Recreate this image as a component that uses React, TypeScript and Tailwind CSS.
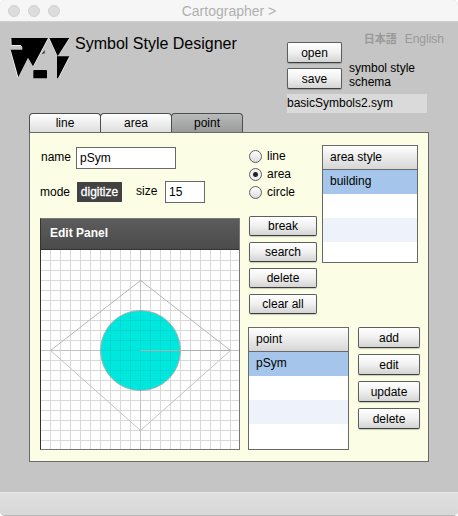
import React, { useState } from "react";

const face =
  "rounded-[2px] border border-[#5c5f5f] border-b-[#3c3f3f] bg-linear-to-b from-white via-[#f0f0f0] to-[#d4d4d4] text-center text-xs leading-4 text-black shadow-[0_1px_1px_rgba(0,0,0,0.2)]";

function PushButton({ label, className }: { label: string; className: string }) {
  return (
    <button type="button" className={`${face} ${className}`}>
      {label}
    </button>
  );
}

function Logo() {
  return (
    <svg viewBox="30 33 180 129" className="h-[43px] w-[60px] shrink-0" aria-label="Logo">
      <g fill="none" stroke="#fff" strokeWidth="3" strokeOpacity="0.8">
        <path d="M33 42L35 61H62L67 66" />
        <path d="M32 77L54 157" />
        <path d="M144 41L100 123" />
        <path d="M148 41L173 93L208 41" />
        <path d="M208 96L175 159" />
      </g>
      <path d="M34 39H144L99 124L84 98L55 156L32 74H67V66L62 60H35Z" fill="#000" />
      <path d="M148 39H208L173 94Z" fill="#000" />
      <path d="M171 94H208L174 160H171Z" fill="#000" />
      <path d="M134 75V85L125 88Z" fill="#333" />
      <path d="M100 137L102 135H139L141 137V160H100Z" fill="#000" />
    </svg>
  );
}

function StyleTable({
  title,
  first,
  className,
  last,
}: {
  title: string;
  first: string;
  className: string;
  last: string;
}) {
  return (
    <div className={`border border-[#696969] bg-white ${className}`}>
      <table className="w-full border-separate border-spacing-0 text-left text-xs leading-4">
        <thead>
          <tr>
            <th className="h-6 border-b border-[#696969] bg-linear-to-b from-white to-[#d6d6d6] px-[7px] pt-0 pb-[2px] font-normal">
              {title}
            </th>
          </tr>
        </thead>
        <tbody>
          <tr>
            <td className="h-6 bg-[#a5c6ea] px-[7px] pt-0 pb-[2px]">{first}</td>
          </tr>
          <tr>
            <td className="h-6 p-0" />
          </tr>
          <tr>
            <td className="h-6 bg-[#edf2fb] p-0" />
          </tr>
          <tr>
            <td className={`p-0 ${last}`} />
          </tr>
        </tbody>
      </table>
    </div>
  );
}

const steps = Array.from({ length: 19 }, (_, i) => i * 10);
const gridPath = steps.map((s) => `M${s + 9.5} 0V199M0 ${s + 10.5}H198`).join("");

function EditCanvas() {
  return (
    <svg viewBox="0 0 198 199" className="block w-full bg-white" aria-label="Symbol drawing">
      <clipPath id="disc">
        <circle cx="99.5" cy="100.5" r="40" />
      </clipPath>
      <path d={gridPath} stroke="#d9d9d9" />
      <path d="M99.5 0V199M0 100.5H198" stroke="#c2c4c4" />
      <circle cx="99.5" cy="100.5" r="40" fill="#00e8de" stroke="#a9b4b4" />
      <path d={gridPath} stroke="#006464" strokeOpacity="0.1" clipPath="url(#disc)" />
      <g fill="none">
        <path d="M9.5 100.5L99.5 30.5L189.5 100.5" stroke="#b4b7b7" />
        <path d="M9.5 100.5L99.5 180.5L189.5 100.5" stroke="#c2c5c5" />
        <path d="M99 100.5H189.5" stroke="#adb0b0" />
      </g>
    </svg>
  );
}

const tabs = ["line", "area", "point"];
const shapes = ["line", "area", "circle"];
const actions = ["break", "search", "delete", "clear all"];
const edits = ["add", "edit", "update", "delete"];

export default function App() {
  const [tab, setTab] = useState("point");
  const [shape, setShape] = useState("area");

  return (
    <div className="flex min-h-screen flex-col bg-white font-['Liberation_Sans',Arial,'Noto_Sans_CJK_JP',sans-serif] text-xs text-black">
      <div className="flex grow flex-col overflow-hidden rounded-[5px] bg-[#c5c5c5]">
        <div className="grid h-[22px] grid-cols-[1fr_auto_1fr] items-center border-b border-[#cfcfcf] bg-[#f6f6f6] px-2">
          <div className="flex gap-2">
            <span className="size-3 rounded-full border border-[#d0d0d0] bg-[#dcdcdc]" />
            <span className="size-3 rounded-full border border-[#d0d0d0] bg-[#dcdcdc]" />
            <span className="size-3 rounded-full border border-[#d0d0d0] bg-[#dcdcdc]" />
          </div>
          <div className="text-sm leading-5 text-[#b0b0b0]">Cartographer &gt;</div>
        </div>

        <header className="flex items-start justify-between pt-[10px] pr-[14px] pl-[10px]">
          <div className="flex items-start pt-1">
            <Logo />
            <h1 className="pl-[5px] text-base leading-4">Symbol Style Designer</h1>
          </div>
          <div className="w-[157px]">
            <div className="flex gap-[7px]">
              <div className="flex flex-col gap-[5px] pt-[10px]">
                <PushButton label="open" className="h-[21px] w-[55px]" />
                <PushButton label="save" className="h-[21px] w-[55px]" />
              </div>
              <div className="flex grow flex-col justify-between">
                <nav className="flex justify-end gap-2 leading-[14px] text-[#999]">
                  <a href="#ja" className="text-[11px] leading-[14px] font-bold">
                    日本語
                  </a>
                  <a href="#en">English</a>
                </nav>
                <p className="leading-[14px]">
                  symbol style
                  <br />
                  schema
                </p>
              </div>
            </div>
            <p className="mt-[5px] h-[19px] w-[140px] bg-[#dadada] leading-[18px]">basicSymbols2.sym</p>
          </div>
        </header>

        <main className="px-[29px] pb-[30px]">
          <div className="flex" role="tablist">
            {tabs.map((t) => (
              <button
                key={t}
                type="button"
                role="tab"
                aria-selected={tab === t}
                onClick={() => setTab(t)}
                className={`-mr-px h-[19px] w-[72px] rounded-t-[4px] border border-b-0 border-[#4c4f4f] bg-linear-to-b leading-4 ${
                  tab === t ? "from-[#b9bbbb] to-[#9a9c9c]" : "from-white to-[#dedede]"
                }`}
              >
                {t}
              </button>
            ))}
          </div>

          <section className="flex gap-2 border border-[#696969] bg-[#fbfee5] pt-3 pr-2 pb-[11px] pl-[10px]">
            <div className="flex grow flex-col">
              <div className="flex items-center pt-[2px]">
                <label htmlFor="name" className="w-9 pb-[2px] pl-px">
                  name
                </label>
                <input
                  id="name"
                  defaultValue="pSym"
                  className="h-[22px] w-[100px] border border-[#696969] bg-white px-[3px] outline-none"
                />
              </div>
              <div className="mt-3 flex items-center">
                <span className="w-[37px]">mode</span>
                <button
                  type="button"
                  className="h-5 w-[45px] bg-[#424242] text-center text-white [-webkit-text-stroke:0.3px_white]"
                >
                  digitize
                </button>
                <label htmlFor="size" className="w-[43px] pb-[2px] pl-[14px]">
                  size
                </label>
                <input
                  id="size"
                  defaultValue="15"
                  className="h-[22px] w-10 border border-[#696969] bg-white px-[3px] outline-none"
                />
              </div>
              <div className="mt-[15px] border border-[#777] border-l-[#333]">
                <h2 className="h-[31px] border-b border-[#333] bg-linear-to-b from-[#5c5c5c] to-[#4b4b4b] pl-[9px] leading-[29px] font-bold text-white">
                  Edit Panel
                </h2>
                <EditCanvas />
              </div>
            </div>

            <div className="flex w-[172px] shrink-0 flex-col justify-between">
              <div className="flex justify-between pr-[2px] pl-px">
                <div className="flex flex-col">
                  <div className="flex flex-col pt-[2px]">
                    {shapes.map((s) => (
                      <label key={s} className="flex h-[18px] items-center gap-[5px]">
                        <input
                          type="radio"
                          name="shape"
                          checked={shape === s}
                          onChange={() => setShape(s)}
                          className="size-[13px] appearance-none rounded-full border border-[#5c5f5f] bg-linear-to-b from-white to-[#dcdcdc] checked:bg-[radial-gradient(circle,#222_2px,#f0f0f0_3px)]"
                        />
                        {s}
                      </label>
                    ))}
                  </div>
                  <div className="flex flex-col gap-[6px] pt-[15px]">
                    {actions.map((a) => (
                      <PushButton key={a} label={a} className="h-5 w-[68px]" />
                    ))}
                  </div>
                </div>
                <StyleTable title="area style" first="building" className="w-24 self-start" last="h-5" />
              </div>
              <div className="flex justify-between">
                <StyleTable title="point" first="pSym" className="w-[101px]" last="h-[25px]" />
                <div className="flex flex-col gap-[6px]">
                  {edits.map((e) => (
                    <PushButton key={e} label={e} className="h-[21px] w-[62px]" />
                  ))}
                </div>
              </div>
            </div>
          </section>
        </main>

        <footer className="mt-auto h-6 border-t border-b border-t-[#e8e8e8] border-b-[#b8b8b8] bg-linear-to-b from-[#e0e0e0] to-[#d8d8d8]" />
      </div>
    </div>
  );
}
